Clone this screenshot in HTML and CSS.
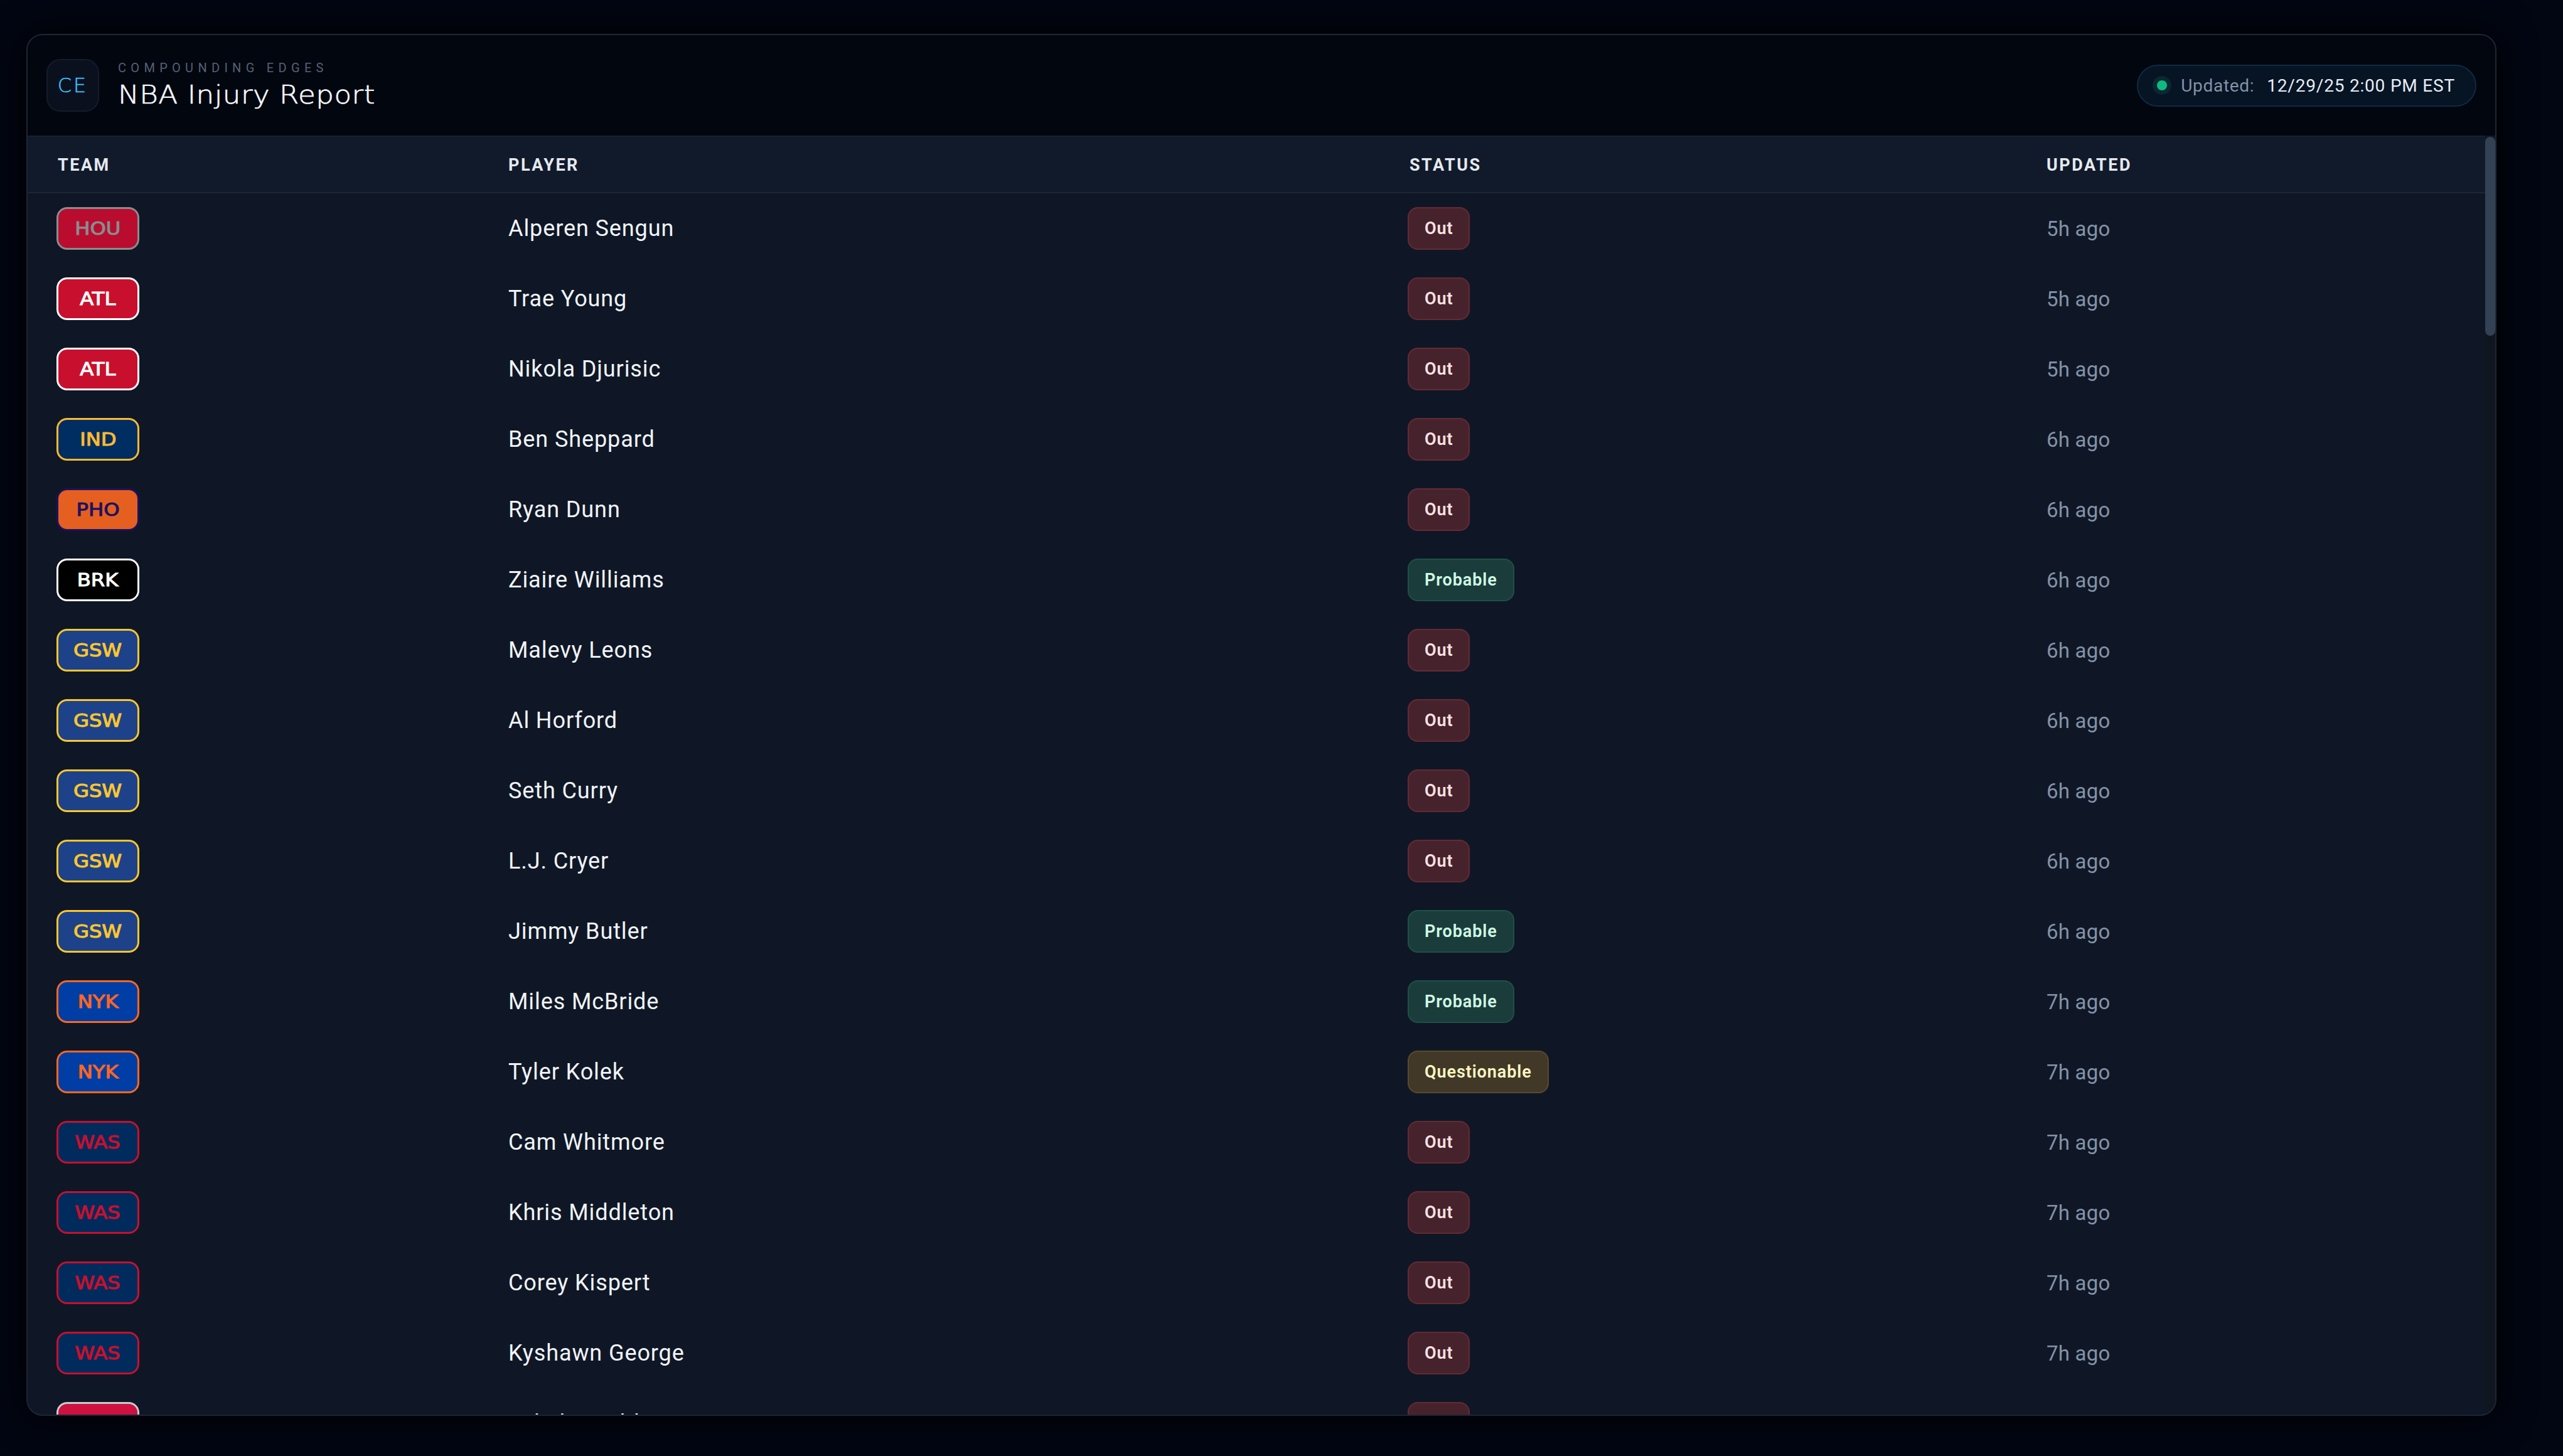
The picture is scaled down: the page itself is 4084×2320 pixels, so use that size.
FILE: index.html
```html
<!DOCTYPE html>
<html lang="en">
<head>
<meta charset="utf-8">
<title>NBA Injury Report</title>
<link rel="stylesheet" href="styles.css">
</head>
<body>
<main class="frame">
  <header class="topbar">
    <div class="brand">
      <div class="logo">CE</div>
      <div class="brand-text">
        <div class="eyebrow">COMPOUNDING EDGES</div>
        <h1 class="title">NBA Injury Report</h1>
      </div>
    </div>
    <div class="pill">
      <span class="dot"></span>
      <span class="pill-label">Updated:</span>
      <span class="pill-value">12/29/25 2:00 PM EST</span>
    </div>
  </header>
  <div class="body">
    <div class="table">
      <div class="row head"><div>TEAM</div><div>PLAYER</div><div>STATUS</div><div>UPDATED</div></div>
      <div class="row"><div><span class="team hou"><span class="code">HOU</span></span></div><div class="name">Alperen Sengun</div><div><span class="status out">Out</span></div><div class="time">5h ago</div></div>
      <div class="row"><div><span class="team atl"><span class="code">ATL</span></span></div><div class="name">Trae Young</div><div><span class="status out">Out</span></div><div class="time">5h ago</div></div>
      <div class="row"><div><span class="team atl"><span class="code">ATL</span></span></div><div class="name">Nikola Djurisic</div><div><span class="status out">Out</span></div><div class="time">5h ago</div></div>
      <div class="row"><div><span class="team ind"><span class="code">IND</span></span></div><div class="name">Ben Sheppard</div><div><span class="status out">Out</span></div><div class="time">6h ago</div></div>
      <div class="row"><div><span class="team pho"><span class="code">PHO</span></span></div><div class="name">Ryan Dunn</div><div><span class="status out">Out</span></div><div class="time">6h ago</div></div>
      <div class="row"><div><span class="team brk"><span class="code">BRK</span></span></div><div class="name">Ziaire Williams</div><div><span class="status probable">Probable</span></div><div class="time">6h ago</div></div>
      <div class="row"><div><span class="team gsw"><span class="code">GSW</span></span></div><div class="name">Malevy Leons</div><div><span class="status out">Out</span></div><div class="time">6h ago</div></div>
      <div class="row"><div><span class="team gsw"><span class="code">GSW</span></span></div><div class="name">Al Horford</div><div><span class="status out">Out</span></div><div class="time">6h ago</div></div>
      <div class="row"><div><span class="team gsw"><span class="code">GSW</span></span></div><div class="name">Seth Curry</div><div><span class="status out">Out</span></div><div class="time">6h ago</div></div>
      <div class="row"><div><span class="team gsw"><span class="code">GSW</span></span></div><div class="name">L.J. Cryer</div><div><span class="status out">Out</span></div><div class="time">6h ago</div></div>
      <div class="row"><div><span class="team gsw"><span class="code">GSW</span></span></div><div class="name">Jimmy Butler</div><div><span class="status probable">Probable</span></div><div class="time">6h ago</div></div>
      <div class="row"><div><span class="team nyk"><span class="code">NYK</span></span></div><div class="name">Miles McBride</div><div><span class="status probable">Probable</span></div><div class="time">7h ago</div></div>
      <div class="row"><div><span class="team nyk"><span class="code">NYK</span></span></div><div class="name">Tyler Kolek</div><div><span class="status questionable">Questionable</span></div><div class="time">7h ago</div></div>
      <div class="row"><div><span class="team was"><span class="code">WAS</span></span></div><div class="name">Cam Whitmore</div><div><span class="status out">Out</span></div><div class="time">7h ago</div></div>
      <div class="row"><div><span class="team was"><span class="code">WAS</span></span></div><div class="name">Khris Middleton</div><div><span class="status out">Out</span></div><div class="time">7h ago</div></div>
      <div class="row"><div><span class="team was"><span class="code">WAS</span></span></div><div class="name">Corey Kispert</div><div><span class="status out">Out</span></div><div class="time">7h ago</div></div>
      <div class="row"><div><span class="team was"><span class="code">WAS</span></span></div><div class="name">Kyshawn George</div><div><span class="status out">Out</span></div><div class="time">7h ago</div></div>
      <div class="row"><div><span class="team tor"><span class="code">TOR</span></span></div><div class="name">Jakob Poeltl</div><div><span class="status out">Out</span></div><div class="time">7h ago</div></div>
    </div>
    <div class="track"><div class="thumb"></div></div>
  </div>
</main>
</body>
</html>
```
FILE: styles.css
```css
* { box-sizing: border-box; }
html, body { height: 100%; }
body {
  margin: 0;
  padding: 54px 106px 64px 42px;
  background: #020612;
  font-family: Roboto, "Noto Sans", sans-serif;
  overflow: hidden;
}
.frame {
  height: 100%;
  display: flex;
  flex-direction: column;
  border: 2px solid #1e2635;
  border-radius: 26px;
  overflow: hidden;
  background: #0f1726;
  box-shadow: 0 0 60px #000;
}
.topbar {
  flex: 0 0 160px;
  display: flex;
  align-items: center;
  justify-content: space-between;
  padding: 0 30px;
  background: #02060f;
}
.brand { display: flex; align-items: center; gap: 30px; }
.logo {
  width: 84px;
  height: 84px;
  display: flex;
  align-items: center;
  justify-content: center;
  border: 2px solid #141c2b;
  border-radius: 22px;
  background: #0a101d;
  color: #38bdf8;
  font-family: "DejaVu Sans", sans-serif;
  font-weight: 200;
  font-size: 32px;
  letter-spacing: 3px;
  -webkit-text-stroke: 0.6px #38bdf8;
}
.brand-text { display: flex; flex-direction: column; gap: 6px; }
.eyebrow {
  color: #556174;
  font-size: 20px;
  letter-spacing: 7.3px;
  line-height: 24px;
}
.title {
  margin: 0;
  color: #f4f6fb;
  font-family: "DejaVu Sans", sans-serif;
  font-weight: 200;
  font-size: 40px;
  line-height: 50px;
  letter-spacing: 0.5px;
  transform: scaleX(1.127);
  transform-origin: left center;
  -webkit-text-stroke: 0.7px #f4f6fb;
}
.pill {
  height: 67px;
  display: flex;
  align-items: center;
  padding: 0 32px 0 30px;
  border: 2px solid #0e2a42;
  border-radius: 34px;
  background: #061424;
  font-size: 28px;
}
.dot {
  width: 16px;
  height: 16px;
  margin-right: 22px;
  border-radius: 50%;
  background: #10b981;
  box-shadow: 0 0 0 7px #0a2732;
}
.pill-label { color: #8492a6; margin-right: 20px; letter-spacing: 0.7px; }
.pill-value { color: #e8edf5; letter-spacing: 0.8px; }
.body { flex: 1; min-height: 0; display: flex; }
.table { flex: 1; min-width: 0; overflow: hidden; }
.track { flex: 0 0 16px; margin-top: 2px; background: #10161f; }
.thumb { height: 317px; border-radius: 8px; background: #334155; }
.row {
  display: grid;
  grid-template-columns: 718px 1436px 1015px 1fr;
  align-items: center;
  height: 112px;
  padding-left: 48px;
  color: #f1f4f9;
}
.head {
  height: 92px;
  padding-top: 2px;
  border-top: 2px solid #182132;
  border-bottom: 2px solid #1e2635;
  background: #111a2b;
  color: #e5e9f0;
  font-size: 27px;
  font-weight: 700;
  letter-spacing: 2.5px;
}
.name { font-size: 36px; letter-spacing: 0.9px; }
.time { font-size: 33px; letter-spacing: 0.2px; color: #8492a6; }
.team {
  display: flex;
  align-items: center;
  justify-content: center;
  width: 132px;
  height: 68px;
  margin-left: -2px;
  border: 3px solid;
  border-radius: 17px;
  font-family: "DejaVu Sans", sans-serif;
  font-size: 28px;
  -webkit-text-stroke: 1px;
}
.code { display: inline-block; transform: scaleX(1.15); }
.hou { background: #ba0c2f; color: #8a8d8f; }
.atl { background: #c8102e; color: #fff; }
.ind { background: #002d62; color: #fdbb30; }
.pho { background: #e56020; color: #1d1160; }
.brk { background: #000; color: #fff; }
.gsw { background: #1d428a; color: #ffc72c; }
.nyk { background: #003da5; color: #ff671f; }
.was { background: #002b5c; color: #c8102e; }
.tor { background: #ce1141; color: #c4ced4; }
.status {
  display: inline-flex;
  align-items: center;
  height: 68px;
  margin-left: -3px;
  padding: 0 25px;
  border: 2px solid;
  border-radius: 16px;
  font-size: 27px;
  font-weight: 600;
  letter-spacing: 0.9px;
  vertical-align: middle;
}
.out { background: #46222c; border-color: #642a34; color: #fee2e2; }
.probable { background: #1a3d3b; border-color: #1e5146; color: #d1fae5; }
.questionable { background: #423827; border-color: #5a4a2a; color: #fef9c3; }
```
